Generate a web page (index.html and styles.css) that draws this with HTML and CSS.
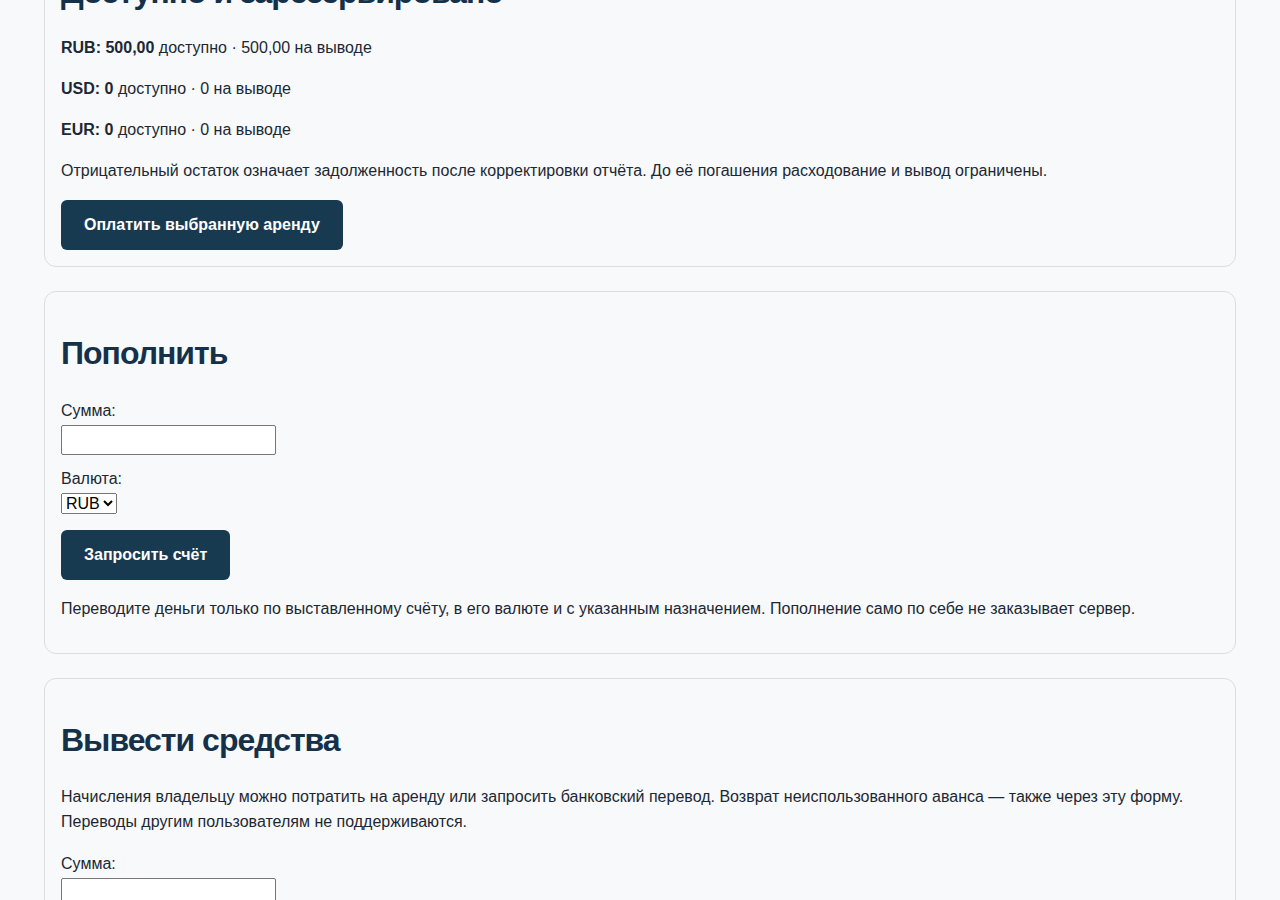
FILE: index.html
```html
<!DOCTYPE html>
<html lang="ru">

<head>
    <meta charset="UTF-8">
    <meta name="viewport" content="width=device-width, initial-scale=1.0">
    <title>Баланс</title>
    <link rel="stylesheet" href="styles.css">
</head>

<body>
<main class="page">
    <!-- Balances -->
    <section class="card">
        <h2>Доступно и зарезервировано</h2>
        <p><strong>RUB: 500,00</strong> доступно · 500,00 на выводе</p>
        <p><strong>USD: 0</strong> доступно · 0 на выводе</p>
        <p><strong>EUR: 0</strong> доступно · 0 на выводе</p>
        <p>Отрицательный остаток означает задолженность после корректировки отчёта. До её погашения расходование и вывод ограничены.</p>
        <div class="actions actions-pay">
            <button class="btn" type="button">Оплатить выбранную аренду</button>
        </div>
    </section>

    <!-- Top up -->
    <section class="card">
        <h2>Пополнить</h2>
        <form class="form">
            <div class="row">
                <label for="topup-amount">Сумма:</label>
                <input class="text-input" id="topup-amount" type="text">
            </div>
            <div class="row">
                <label for="topup-currency">Валюта:</label>
                <select id="topup-currency">
                    <option>RUB</option>
                    <option>USD</option>
                    <option>EUR</option>
                </select>
            </div>
            <div class="actions">
                <button class="btn" type="button">Запросить счёт</button>
            </div>
        </form>
        <p>Переводите деньги только по выставленному счёту, в его валюте и с указанным назначением. Пополнение само по себе не заказывает сервер.</p>
    </section>

    <!-- Withdraw -->
    <section class="card">
        <h2>Вывести средства</h2>
        <p>Начисления владельцу можно потратить на аренду или запросить банковский перевод. Возврат неиспользованного аванса — также через эту форму. Переводы другим пользователям не поддерживаются.</p>
        <form class="form">
            <div class="row">
                <label for="out-amount">Сумма:</label>
                <input class="text-input" id="out-amount" type="text">
            </div>
            <div class="row">
                <label for="out-currency">Валюта:</label>
                <select id="out-currency">
                    <option>RUB</option>
                    <option>USD</option>
                    <option>EUR</option>
                </select>
            </div>
            <div class="row">
                <label for="out-details">Реквизиты:</label>
                <input class="text-input" id="out-details" type="text">
            </div>
            <div class="actions">
                <button class="btn" type="button">Запросить вывод</button>
            </div>
        </form>
    </section>
</main>

<script>
    // the screenshot shows the page scrolled a little down
    window.addEventListener('load', function () {
        window.scrollTo(0, 95);
    });
</script>
</body>

</html>
```

FILE: styles.css
```css
/* Page */
html {
    scroll-behavior: auto;
}

body {
    margin: 0;
    background-color: #f7f9fb;
    color: #1c2833;
    font-family: "Liberation Sans", Arial, sans-serif;
    font-size: 16px;
    line-height: 25px;
}

.page {
    padding: 24.5px 44px 40px;
}

/* Cards */
.card {
    background-color: #f7f9fb;
    border: 1px solid #d9dee3;
    border-radius: 12px;
    padding: 16px;
    margin-bottom: 24px;
}

.card h2 {
    font-size: 32px;
    font-weight: bold;
    line-height: 49.6px;
    color: #15314a;
    letter-spacing: -1px;
    margin: 21.4px 0 18px;
}

.card p {
    margin: 16px 0;
}

/* Forms */
.form {
    padding-top: 1.5px;
}

.row {
    margin-bottom: 11px;
}

.row label {
    display: block;
}

.text-input {
    display: block;
    box-sizing: border-box;
    width: 215px;
    height: 30px;
    margin-top: 1.5px;
    padding: 2px 6px;
    border: 1px solid #767676;
    border-radius: 2px;
    background-color: #fff;
    font-family: inherit;
    font-size: 16px;
}

select {
    display: block;
    margin-top: 2px;
    font-family: inherit;
    font-size: 16px;
}

.actions {
    display: flex;
    margin-top: 16px;
}

.actions-pay {
    margin-top: 16.5px;
}

.btn {
    background-color: #183a51;
    color: #fff;
    border: 0;
    border-radius: 6px;
    padding: 13px 23px;
    font-family: inherit;
    font-size: 16px;
    font-weight: bold;
    line-height: 24px;
    cursor: pointer;
}
```
